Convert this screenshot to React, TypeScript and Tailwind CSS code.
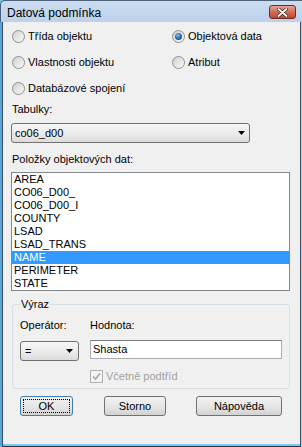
import React from 'react';

const items = ['AREA', 'CO06_D00_', 'CO06_D00_I', 'COUNTY', 'LSAD', 'LSAD_TRANS', 'NAME', 'PERIMETER', 'STATE'];

function Radio({ label, checked = false }: { label: string; checked?: boolean }) {
  return (
    <div className="flex items-center h-[13px] ml-[1px]">
      <span className="relative w-[13px] h-[13px] rounded-full border border-[#8f8f8f] bg-gradient-to-br from-[#cfcfcf] to-[#fbfbfb] flex items-center justify-center shrink-0">
        {checked && (
          <span className="w-[7px] h-[7px] rounded-full bg-[radial-gradient(circle_at_40%_35%,#8fc4f0_0%,#2a6fb8_45%,#153e6e_100%)]" />
        )}
      </span>
      <span className="ml-[3px] leading-[13px]">{label}</span>
    </div>
  );
}

function Arrow() {
  return (
    <svg width="7" height="4" viewBox="0 0 7 4" className="shrink-0">
      <path d="M0 0 H7 L3.5 4 Z" fill="#000" />
    </svg>
  );
}

function Button({ label, width, focused = false }: { label: string; width: number; focused?: boolean }) {
  return (
    <div
      className={`relative h-[20px] rounded-[3px] border flex items-center justify-center bg-gradient-to-b from-[#f2f2f2] via-[#e7e7e7] to-[#d2d2d2] ${
        focused ? 'border-[#3c7fb1]' : 'border-[#707070]'
      }`}
      style={{ width }}
    >
      {focused && <span className="absolute inset-[2px] border border-dotted border-[#000]" />}
      <span className="leading-[13px]">{label}</span>
    </div>
  );
}

export default function App() {
  return (
    <div className="w-[302px] h-[447px] flex flex-col bg-[#7fc2ea] text-[11px] text-black font-['Liberation_Sans',Arial,sans-serif] overflow-hidden">
      {/* Title bar */}
      <div className="h-[22px] flex items-center justify-between bg-gradient-to-b from-[#cbdcf0] to-[#bcd1ea] border-l border-t border-[#4b5f78] rounded-tl-[5px] shrink-0">
        <span className="ml-[6px] text-[12px] leading-[14px] mt-[2px]">Datová podmínka</span>
        <div className="mr-[6px] mt-[1px] w-[27px] h-[14px] rounded-[3px] border border-[#6d2b22] bg-gradient-to-b from-[#e8a596] via-[#d36a56] to-[#c24630] flex items-center justify-center">
          <svg width="11" height="9" viewBox="0 0 11 9">
            <path d="M1.5 1 L9.5 8 M9.5 1 L1.5 8" stroke="#5a2018" strokeWidth="3.4" strokeLinecap="round" />
            <path d="M1.5 1 L9.5 8 M9.5 1 L1.5 8" stroke="#fff" strokeWidth="1.8" strokeLinecap="round" />
          </svg>
        </div>
      </div>

      <div className="flex flex-1">
        {/* left frame */}
        <div className="w-[2px] bg-[#5aa7dc]" />
        <div className="w-[1px] bg-[#3a4d63]" />

        <div className="w-[297px] flex flex-col">
          {/* Body */}
          <div className="h-[422px] bg-[#f0f0f0] pl-[8px] pt-[8px] flex flex-col">
            <div className="grid grid-cols-[160px_1fr] gap-y-[13px]">
              <Radio label="Třída objektu" />
              <Radio label="Objektová data" checked />
              <Radio label="Vlastnosti objektu" />
              <Radio label="Atribut" />
              <Radio label="Databázové spojení" />
            </div>

            <div className="mt-[8px] leading-[13px] ml-[1px]">Tabulky:</div>
            <div className="mt-[7px] w-[239px] h-[20px] rounded-[3px] border border-[#707070] bg-gradient-to-b from-[#f6f6f6] via-[#ececec] to-[#dcdcdc] flex items-center justify-between pl-[3px] pr-[4px]">
              <span className="leading-[13px]">co06_d00</span>
              <Arrow />
            </div>

            <div className="mt-[10px] leading-[13px] ml-[1px]">Položky objektových dat:</div>
            <div className="mt-[6px] w-[279px] h-[119px] border border-[#828790] bg-white flex flex-col">
              {items.map((it) => (
                <div
                  key={it}
                  className={`h-[13px] leading-[13px] pl-[2px] ${it === 'NAME' ? 'bg-[#3399ff] text-white' : ''}`}
                >
                  {it}
                </div>
              ))}
            </div>

            {/* Group box */}
            <div className="relative mt-[13px] ml-[1px] w-[278px] h-[85px] rounded-[3px] border border-[#d5dfe5] pl-[7px] pt-[14px]">
              <span className="absolute left-[7px] top-[-7px] px-[1px] bg-[#f0f0f0] leading-[13px]">Výraz</span>
              <div className="flex">
                <div className="w-[70px] flex flex-col">
                  <span className="leading-[13px]">Operátor:</span>
                  <div className="mt-[9px] w-[59px] h-[20px] rounded-[3px] border border-[#707070] bg-gradient-to-b from-[#f6f6f6] via-[#ececec] to-[#dcdcdc] flex items-center justify-between pl-[4px] pr-[5px]">
                    <span className="leading-[13px]">=</span>
                    <Arrow />
                  </div>
                </div>
                <div className="flex flex-col">
                  <span className="leading-[13px]">Hodnota:</span>
                  <div className="mt-[8px] w-[192px] h-[19px] border border-[#abadb3] border-t-[#7a7c81] bg-white flex items-center pl-[2px]">
                    <span className="leading-[13px]">Shasta</span>
                  </div>
                  <div className="mt-[11px] flex items-center h-[13px]">
                    <span className="w-[13px] h-[13px] border border-[#b1b1b1] bg-[#f4f4f4] flex items-center justify-center">
                      <svg width="9" height="9" viewBox="0 0 9 9">
                        <path d="M1 4.5 L3.5 7 L8 1.5" stroke="#a6a6a6" strokeWidth="1.6" fill="none" />
                      </svg>
                    </span>
                    <span className="ml-[3px] leading-[13px] text-[#a0a0a0]">Včetně podtříd</span>
                  </div>
                </div>
              </div>
            </div>

            {/* Buttons */}
            <div className="mt-[7px] flex items-center">
              <div className="ml-[9px]">
                <Button label="OK" width={53} focused />
              </div>
              <div className="ml-[31px]">
                <Button label="Storno" width={62} />
              </div>
              <div className="ml-[30px]">
                <Button label="Nápověda" width={86} />
              </div>
            </div>
          </div>
          <div className="h-[2px] bg-[#79c8ee]" />
          <div className="h-[1px] bg-[#22364c]" />
        </div>

        {/* right frame */}
        <div className="w-[1px] bg-[#3a4d63]" />
        <div className="w-[1px] bg-[#9fd3f2]" />
      </div>
    </div>
  );
}
